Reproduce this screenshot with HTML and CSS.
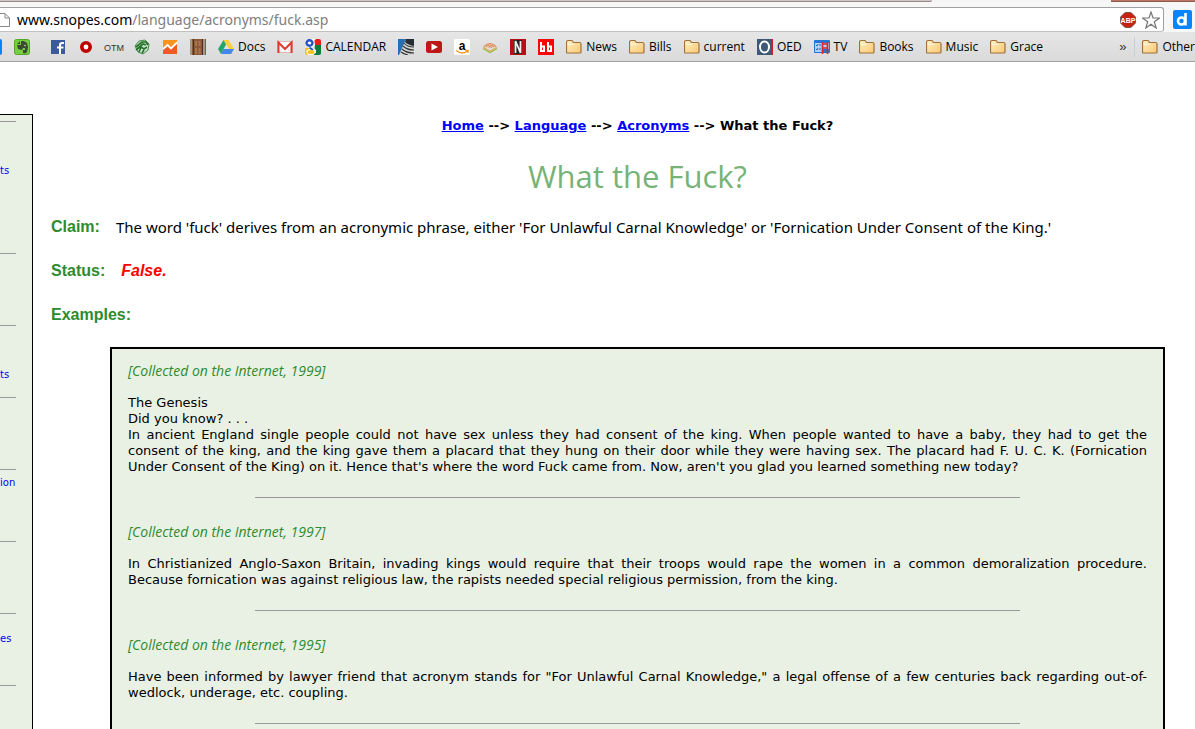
FILE: index.html
```
<!DOCTYPE html>
<html lang="en">
<head>
  <meta charset="UTF-8" />
  <meta name="viewport" content="width=device-width, initial-scale=1.0"/>
  <title>What the Fuck?</title>
  <link rel="stylesheet" href="styles.css">
</head>
<body>
  <svg class="defs" aria-hidden="true">
    <defs>
      <linearGradient id="folderFill" x1="0" y1="0" x2="1" y2="1">
        <stop offset="0" stop-color="#ffefc0"/>
        <stop offset="1" stop-color="#fbc873"/>
      </linearGradient>
    </defs>
    <symbol id="folder" viewBox="0 0 16 16">
      <path d="M0.500 13V3.500Q0.500 1.500 2 1.500H6L7.500 3.500H13.500Q15 3.500 15 5V13Q15 14 14 14H1.500Q0.500 14 0.500 13Z" fill="url(#folderFill)" stroke="#a0703c" stroke-width="1.200"/>
      <path d="M2 5.500H7L8.500 4.500M2 5V3.500" fill="none" stroke="#fff6dc"/>
    </symbol>
  </svg>

  <header class="browser">
    <div class="tabs">
      <div class="tabs-left"></div>
      <div class="tabs-right"></div>
    </div>
    <div class="toolbar">
      <div class="omnibox">
        <svg class="page-icon" viewBox="0 0 10 16"><path d="M0 1.500H5L9.500 6V14.500H0M5 1.500V6H9.500" fill="#fff" stroke="#888"/></svg>
        <div class="url"><span class="host">www.snopes.com</span>/language/acronyms/fuck.asp</div>
        <button class="icon-btn" aria-label="Adblock">
          <svg viewBox="0 0 16 16"><path d="M5 0.500H11L15.500 5V11L11 15.500H5L0.500 11V5Z" fill="#c9200f" stroke="#7d5a55"/><text x="8" y="11" class="abp">ABP</text></svg>
        </button>
        <button class="icon-btn" aria-label="Bookmark this page">
          <svg class="star" viewBox="0 0 18 18"><path d="M9 1L11 7H17.500L12.300 10.700L14.200 17L9 13.200L3.800 17L5.700 10.700L0.500 7H7Z" fill="#fff" stroke="#777" stroke-width="1.200"/></svg>
        </button>
      </div>
      <button class="extension" aria-label="Extension">
        <svg viewBox="0 0 19 19"><rect width="19" height="19" rx="2" fill="#0a84fa"/><circle cx="8.500" cy="11" r="3.500" fill="none" stroke="#fff" stroke-width="2.600"/><path d="M12.500 3V15.500" stroke="#fff" stroke-width="2.600"/></svg>
      </button>
    </div>
    <nav class="bookmarks">
      <div class="cut"></div>
      <a class="evernote" href="#" aria-label="Evernote"><svg viewBox="0 0 16 16"><rect x="0.500" y="0.500" width="15" height="15" rx="2" fill="#74d042" stroke="#55a52b"/><path d="M3 5L6 2V5ZM7 2H10L13 4L14 8L13 13Q12 15 9 14V11L11 11V9H9L8 11L4 10L3 6H7Z" fill="#3c4a38"/><circle cx="11" cy="6.500" r="0.800" fill="#bfe6a8"/></svg></a>
      <a href="#" aria-label="Facebook"><svg viewBox="0 0 16 16"><rect x="1" y="1" width="14" height="14" fill="#3b5a9b"/><path d="M9 15V9.500H7V7.500H9V6Q9 3 12 3H14V5H12.500Q11 5 11 6.500V7.500H13.500V9.500H11V15Z" fill="#fff"/></svg></a>
      <a href="#" aria-label="Opera"><svg viewBox="0 0 16 16"><circle cx="8" cy="8" r="4.200" fill="#fff" stroke="#c10000" stroke-width="3.600"/></svg></a>
      <a href="#" aria-label="OTM"><svg viewBox="0 0 16 16" overflow="visible"><text x="8" y="12" class="otm">OTM</text></svg></a>
      <a href="#" aria-label="Green"><svg viewBox="0 0 16 16"><path d="M1 7L5 2L11 1L15 5L14 11L9 15L4 13Z" fill="#cfe3cf" stroke="#3f8a45"/><path d="M2 8L8 3M2 11L9 5L12 6M5 13L7 8L10 10L13 8M8 14L10 11M8 3L12 3L14 6" fill="none" stroke="#25732b" stroke-width="1.700"/></svg></a>
      <a href="#" aria-label="Analytics"><svg viewBox="0 0 16 16"><rect x="1" y="1" width="14" height="14" fill="#f8931f"/><path d="M1 11L6 7L9 10L15 4V15H1Z" fill="#f15b22"/><path d="M1 10L5.500 6L9 9.500L15 3.500" fill="none" stroke="#fff" stroke-width="1.800"/></svg></a>
      <a href="#" aria-label="Door"><svg viewBox="0 0 16 16"><path d="M0 0H16V16H0Z" fill="#8a5a36"/><path d="M1 0V16M14 0V16" stroke="#a89680" stroke-width="2"/><path d="M3.500 0V16M12.500 0V16" stroke="#4b3022"/><path d="M6 2V7M9.500 2V7M6 9V15M9.500 9V15" stroke="#a9754a" stroke-width="2"/></svg></a>
      <a href="#"><svg viewBox="0 0 16 16"><path d="M5.500 1H10.500L16 10H11Z" fill="#fdd03c"/><path d="M5.500 1L8 5.500L3 15L0 10Z" fill="#25a567"/><path d="M5.500 10H16L13 15H3Z" fill="#4187ec"/></svg>Docs</a>
      <a href="#" aria-label="Gmail"><svg viewBox="0 0 16 16"><rect x="0.500" y="2.500" width="15" height="11" fill="#fff" stroke="#ddb9b5"/><path d="M1.500 14V3.500L8 10L14.500 3.500V14" fill="none" stroke="#df3b31" stroke-width="2"/><path d="M3 13L6 9M13 13L10 9" stroke="#ddd"/></svg></a>
      <a href="#"><svg viewBox="0 0 16 16"><path d="M9 0H14Q16 0 16 2V6H10Z" fill="#e2231a"/><path d="M10 6H16V14Q16 16 14 16H9Z" fill="#087b3d"/><path d="M0 9H5V16H2Q0 16 0 14Z" fill="#f6c21b"/><path d="M4 0H11L9 2L10 6L7 8L11 11V14L7 16H3L1 12L4 10V8L0 6V2Z" fill="#fff"/><ellipse cx="4.500" cy="4" rx="3" ry="2.800" fill="#fff" stroke="#2452c4" stroke-width="2.400"/><path d="M4.500 8.500L8 11" stroke="#2452c4" stroke-width="2"/><ellipse cx="6" cy="13" rx="3.500" ry="2" fill="#f6c21b"/></svg>CALENDAR</a>
      <a href="#" aria-label="Waves"><svg viewBox="0 0 16 16"><rect width="16" height="16" fill="#d8d8d2"/><path d="M0 0H8L1 16H0Z" fill="#276fb2"/><path d="M8 0H16V7Q10 6 7 3Z" fill="#252d35"/><path d="M6 4Q9 8 16 8M5 7Q9 11 16 11M4 10Q8 14 16 14M3 13Q6 15 10 16" fill="none" stroke="#30363b" stroke-width="1.200"/></svg></a>
      <a href="#" aria-label="YouTube"><svg viewBox="0 0 16 16"><rect y="2" width="16" height="12" rx="2.500" fill="#bd1717"/><path d="M5.500 4.500V11.500L12 8Z" fill="#fff"/></svg></a>
      <a href="#" aria-label="Amazon"><svg viewBox="0 0 16 16"><rect width="16" height="16" rx="2" fill="#fff"/><text x="8" y="11" class="amazon">a</text><path d="M2 11.500Q8 16 13 12.500M11 11.500H14V14" fill="none" stroke="#f79b24" stroke-width="1.400"/></svg></a>
      <a href="#" aria-label="Audible"><svg viewBox="0 0 16 16"><path d="M1 8L8 12L15 8" fill="none" stroke="#e8a34d"/><path d="M1 9.500L8 13.500L15 9.500" fill="none" stroke="#9cb83d" stroke-width="1.300"/><path d="M2 7.500Q8 1.500 14 7.500M4 8Q8 4 12 8M6.500 8.500Q8 6.500 10 9" fill="none" stroke="#e08a50" stroke-width="1.100"/></svg></a>
      <a href="#" aria-label="Netflix"><svg viewBox="0 0 16 16"><rect width="16" height="16" fill="#b90e16"/><path d="M4 1H12V15H4Z" fill="#252020"/><path d="M5.500 14V2L10.500 14V2" fill="none" stroke="#eee" stroke-width="1.800"/></svg></a>
      <a href="#" aria-label="Boing Boing"><svg viewBox="0 0 16 16"><rect width="16" height="16" fill="#fa0505"/><path d="M3 3V12H6V7.500H3M10 3V12H13V7.500H10" fill="none" stroke="#fff" stroke-width="2"/></svg></a>
      <a href="#"><svg><use href="#folder"/></svg>News</a>
      <a href="#"><svg><use href="#folder"/></svg>Bills</a>
      <a href="#"><svg><use href="#folder"/></svg>current</a>
      <a href="#"><svg viewBox="0 0 16 16"><rect width="16" height="16" fill="#405878"/><path d="M15.500 0V16" stroke="#d81b22"/><ellipse cx="7.500" cy="8" rx="4.500" ry="5.500" fill="none" stroke="#fff" stroke-width="2"/></svg>OED</a>
      <a href="#"><svg viewBox="0 0 16 16"><rect y="1" width="16" height="13" rx="1" fill="#2475d8"/><path d="M1 4H8V13H1ZM9 4H15V10H9Z" fill="#a9d1fa"/><path d="M2 6L3 7L4 5M5 6H7M2 10L3 11L4 9M5 10H7" fill="none" stroke="#2465b3"/><path d="M8.500 3V15M13.500 3V15M8 5H14M8 9H14" fill="none" stroke="#df2528" stroke-width="1.700"/></svg>TV</a>
      <a href="#"><svg><use href="#folder"/></svg>Books</a>
      <a href="#"><svg><use href="#folder"/></svg>Music</a>
      <a href="#"><svg><use href="#folder"/></svg>Grace</a>
      <button class="more" aria-label="More bookmarks">»</button>
      <a class="other" href="#"><svg><use href="#folder"/></svg>Other</a>
    </nav>
  </header>

  <div class="page">
    <aside class="sidebar">
      <div class="section tall"><a href="#">ts</a></div>
      <div class="section"></div>
      <div class="section middle"><a href="#">ts</a></div>
      <div class="section"></div>
      <div class="section top"><a href="#">ion</a></div>
      <div class="section"></div>
      <div class="section low"><a href="#">es</a></div>
      <div class="section"></div>
    </aside>

    <main class="content">
      <nav class="breadcrumb">
        <a href="#">Home</a> --&gt; <a href="#">Language</a> --&gt; <a href="#">Acronyms</a> --&gt; What the Fuck?
      </nav>
      <h1>What the Fuck?</h1>

      <p class="fact"><b>Claim:</b> <span>The word 'fuck' derives from an acronymic phrase, either 'For Unlawful Carnal Knowledge' or 'Fornication Under Consent of the King.'</span></p>
      <p class="fact"><b>Status:</b> <em>False.</em></p>
      <p class="fact"><b>Examples:</b></p>

      <div class="examples">
        <h2>[Collected on the Internet, 1999]</h2>
        <p>The Genesis<br>Did you know? . . .</p>
        <p>
          <span class="line">In ancient England single people could not have sex unless they had consent of the king. When people wanted to have a baby, they had to get the</span>
          <span class="line">consent of the king, and the king gave them a placard that they hung on their door while they were having sex. The placard had F. U. C. K. (Fornication</span>
          Under Consent of the King) on it. Hence that's where the word Fuck came from. Now, aren't you glad you learned something new today?
        </p>
        <hr>
        <h2>[Collected on the Internet, 1997]</h2>
        <p>
          <span class="line">In Christianized Anglo-Saxon Britain, invading kings would require that their troops would rape the women in a common demoralization procedure.</span>
          Because fornication was against religious law, the rapists needed special religious permission, from the king.
        </p>
        <hr>
        <h2>[Collected on the Internet, 1995]</h2>
        <p>Have been informed by lawyer friend that acronym stands for "For Unlawful Carnal Knowledge," a legal offense of a few centuries back regarding out-of-wedlock, underage, etc. coupling.</p>
        <hr>
      </div>
    </main>
  </div>
</body>
</html>
```
FILE: styles.css
```
* {
  box-sizing: border-box;
}

body {
  margin: 0;
  height: 100vh;
  display: flex;
  flex-direction: column;
  overflow: hidden;
  background: white;
  font-family: "DejaVu Sans", sans-serif;
  font-size: 13px;
  color: #000;
}

.defs {
  position: absolute;
  width: 0;
  height: 0;
}

button {
  border: none;
  background: none;
  padding: 0;
}

/* browser bar */
.browser {
  flex: none;
  font-family: "Noto Sans", sans-serif;
}

.tabs {
  display: flex;
  justify-content: space-between;
  height: 2px;
  background: #f4f4f4;
}

.tabs-left {
  width: 78%;
  background: #d0c6c6;
  border-bottom: 1px solid #968c8c;
  border-radius: 0 0 3px 0;
}

.tabs-right {
  width: 7%;
  background: #bd7565;
  border-bottom: 1px solid #91594c;
}

.toolbar {
  display: flex;
  align-items: center;
  height: 30px;
  padding: 5px 3px 0 0;
  background: #f7f7f7;
}

.omnibox {
  flex: 1;
  display: flex;
  align-items: center;
  height: 25px;
  margin-right: 9px;
  padding-right: 3px;
  background: white;
  border: 1px solid #a0a0a0;
  border-left: none;
  border-bottom-color: #c0c0c0;
  border-radius: 0 3px 3px 0;
}

.page-icon {
  width: 10px;
  height: 16px;
  margin-right: 7px;
}

.url {
  flex: 1;
  font-size: 14px;
  line-height: 22px;
  color: #808080;
}

.host {
  color: #000;
}

.icon-btn {
  display: flex;
  margin-left: 6px;
}

.icon-btn svg {
  width: 16px;
  height: 16px;
}

.icon-btn .star {
  width: 18px;
  height: 18px;
}

.extension {
  display: flex;
}

.extension svg {
  width: 19px;
  height: 19px;
}

.abp {
  font: bold 7px "Liberation Sans", sans-serif;
  text-anchor: middle;
  fill: white;
}

.otm {
  font: 9px "Liberation Sans", sans-serif;
  text-anchor: middle;
  fill: #333;
}

.amazon {
  font: bold 12px "Liberation Sans", sans-serif;
  text-anchor: middle;
}

.bookmarks {
  display: flex;
  align-items: center;
  gap: 12px;
  height: 30px;
  overflow: hidden;
  background: linear-gradient(#e6e6e6, #dadada);
  border-bottom: 1px solid #a0a0a0;
  font-family: "Open Sans", sans-serif;
  font-size: 12px;
  white-space: nowrap;
}

.bookmarks a {
  flex: none;
  display: flex;
  align-items: center;
  gap: 4px;
  color: #000;
  text-decoration: none;
}

.bookmarks svg {
  width: 16px;
  height: 16px;
}

.bookmarks .evernote {
  margin-right: 8px;
}

.cut {
  width: 2px;
  height: 16px;
  background: #0a84fa;
  border-radius: 0 2px 2px 0;
}

.more {
  margin-left: auto;
  margin-right: -4px;
  font-size: 13px;
  color: #333;
}

.bookmarks .other {
  height: 20px;
  padding-left: 7px;
  border-left: 1px solid #c4d0dc;
}

/* page */
.page {
  flex: 1;
  display: flex;
  min-height: 0;
}

.sidebar {
  flex: none;
  width: 33px;
  margin-top: 52px;
  padding-top: 6px;
  overflow: hidden;
  background: #e9f1e4;
  border-top: 1px solid #000;
  border-right: 1px solid #000;
  font-size: 10px;
  line-height: 12px;
}

.section {
  width: 16px;
  height: 72px;
  border-top: 1px solid #999;
}

.sidebar a {
  color: #00f;
  text-decoration: none;
}

.tall {
  height: 132px;
  padding-top: 43px;
}

.middle {
  padding-top: 43px;
}

.top {
  padding-top: 7px;
}

.low {
  padding-top: 19px;
}

.content {
  flex: 1;
  padding: 56px 30px 0 18px;
}

.breadcrumb {
  margin-left: 59px;
  font-weight: bold;
  line-height: 16px;
  text-align: center;
}

.breadcrumb a {
  color: #00f;
}

h1 {
  margin: 20px 0 17px 59px;
  font-family: "Open Sans", sans-serif;
  font-size: 31px;
  font-weight: normal;
  line-height: 44px;
  color: #77b377;
  text-align: center;
}

.fact {
  display: flex;
  gap: 16px;
  margin: 0 0 20px;
  font-family: "Liberation Sans", sans-serif;
  font-size: 16px;
  line-height: 24px;
}

.fact b {
  color: #2e8b2e;
}

.fact span {
  font-family: "Noto Sans", sans-serif;
  font-size: 15px;
  white-space: nowrap;
}

.fact em {
  color: #f00;
  font-weight: bold;
}

.examples {
  margin-left: 59px;
  padding: 13px 16px;
  background: #e9f1e4;
  border: 2px solid #000;
  line-height: 16px;
  text-align: justify;
}

.examples h2 {
  margin: 0 0 16px;
  font-family: "Open Sans", sans-serif;
  font-size: 14px;
  font-style: italic;
  font-weight: normal;
  line-height: 17px;
  color: #2e8b2e;
}

.examples p {
  margin: 0;
}

.line {
  display: block;
  text-align-last: justify;
}

.examples hr {
  width: 75%;
  height: 1px;
  margin: 22px auto 25px;
  border: none;
  background: #999;
}
```
